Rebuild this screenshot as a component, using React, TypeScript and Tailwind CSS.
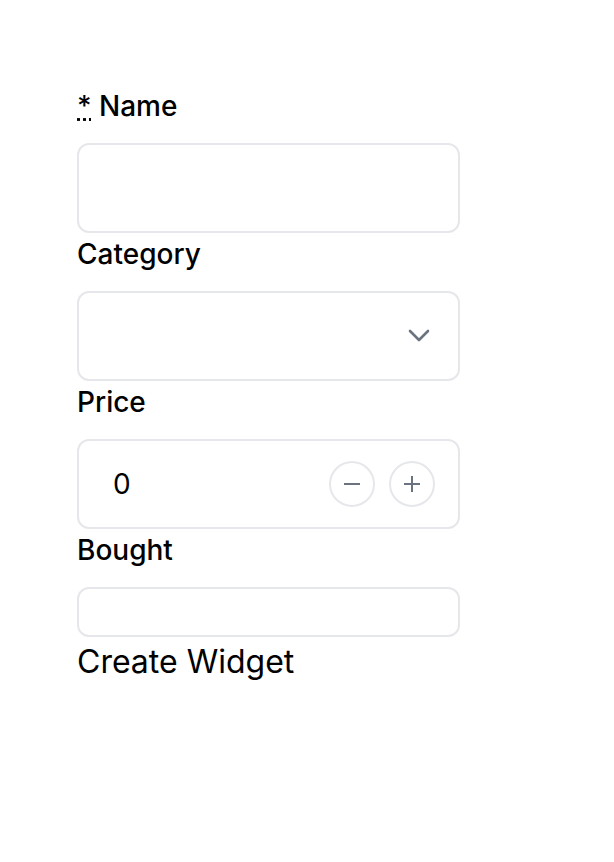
import React from "react";

export default function App() {
  const font = { fontFamily: "Inter, 'Noto Sans', sans-serif" };
  return (
    <div className="min-h-[862px] bg-white text-black" style={font}>
      <form className="flex w-[383px] flex-col ml-[77px] pt-[85px]">
        <label className="text-[28px] leading-[42px] font-medium mb-4">
          <abbr title="required" className="underline decoration-dotted">*</abbr> Name
        </label>
        <input className="h-[90px] w-full rounded-xl border-2 border-[#e5e7eb] px-6 text-[26px] outline-none" />

        <label className="text-[28px] leading-[42px] font-medium mb-4">Category</label>
        <div className="relative h-[90px] w-full rounded-xl border-2 border-[#e5e7eb]">
          <svg className="absolute right-[28px] top-[36px]" width="22" height="14" viewBox="0 0 22 14" fill="none">
            <path d="M2 2L11 11L20 2" stroke="#6b7280" strokeWidth="2.6" strokeLinecap="round" strokeLinejoin="round" />
          </svg>
        </div>

        <label className="text-[28px] leading-[42px] font-medium mb-4">Price</label>
        <div className="flex h-[90px] w-full items-center rounded-xl border-2 border-[#e5e7eb] pl-[34px] pr-[23px]">
          <span className="flex-1 text-[28px]">0</span>
          <div className="flex gap-[14px]">
            <button type="button" className="flex h-[46px] w-[46px] items-center justify-center rounded-full border-2 border-[#e5e7eb] bg-white">
              <svg width="18" height="18" viewBox="0 0 18 18"><path d="M1 9H17" stroke="#6b7280" strokeWidth="2" /></svg>
            </button>
            <button type="button" className="flex h-[46px] w-[46px] items-center justify-center rounded-full border-2 border-[#e5e7eb] bg-white">
              <svg width="18" height="18" viewBox="0 0 18 18"><path d="M1 9H17M9 1V17" stroke="#6b7280" strokeWidth="2" /></svg>
            </button>
          </div>
        </div>

        <label className="text-[28px] leading-[42px] font-medium mb-4">Bought</label>
        <input className="h-[50px] w-full rounded-xl border-2 border-[#e5e7eb] px-4 outline-none" />

        <button type="button" className="self-start text-[32px] leading-[50px] text-left">Create Widget</button>
      </form>
    </div>
  );
}
